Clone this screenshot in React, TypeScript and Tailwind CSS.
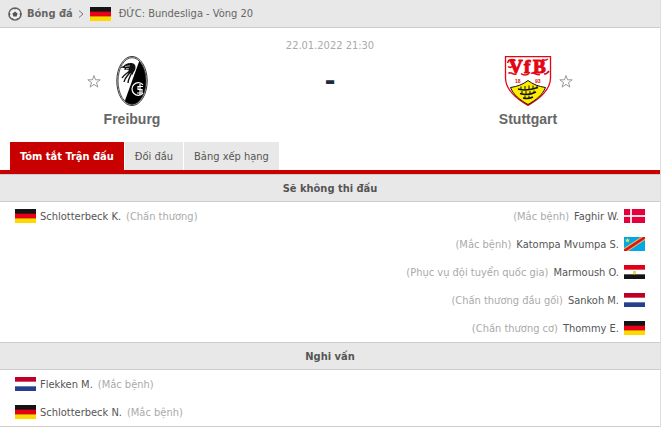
import clsx from "clsx";

type Country = "de" | "dk" | "cd" | "eg" | "nl";

type Player = {
  name: string;
  reason: string;
  country: Country;
};

const Flag = ({ country }: { country: Country }) => (
  <svg viewBox="0 0 21 14" className="h-[14px] w-[21px] shrink-0" role="img" aria-label={country}>
    {country === "de" && (
      <>
        <rect width="21" height="14" fill="#141414" />
        <rect y="4.67" width="21" height="4.67" fill="#ea0016" />
        <rect y="9.33" width="21" height="4.67" fill="#ffd800" />
      </>
    )}
    {country === "nl" && (
      <>
        <rect width="21" height="14" fill="#fff" />
        <rect width="21" height="4.67" fill="#be0027" />
        <rect y="9.33" width="21" height="4.67" fill="#24408e" />
      </>
    )}
    {country === "eg" && (
      <>
        <rect width="21" height="14" fill="#fff" />
        <rect width="21" height="4.67" fill="#e10019" />
        <rect y="9.33" width="21" height="4.67" fill="#141414" />
        <path d="M9 6h3v2.500l-1.500 1L9 8.500z" fill="#f5d23c" />
      </>
    )}
    {country === "dk" && (
      <>
        <rect width="21" height="14" fill="#e4003a" />
        <rect x="6" width="2" height="14" fill="#fff" opacity=".85" />
        <rect y="6" width="21" height="2" fill="#fff" opacity=".85" />
      </>
    )}
    {country === "cd" && (
      <>
        <rect width="21" height="14" fill="#00a9e6" />
        <path d="M0 14V11L17 0H21V3L4.500 14z" fill="#e8b84b" />
        <path d="M0 14V12.500L19 0H21V1.800L2.500 14z" fill="#dc1020" />
        <path d="M3.500 1l.7 1.600 1.800.1-1.400 1.100.5 1.700-1.600-1-1.600 1 .5-1.700L1 2.700l1.800-.1z" fill="#f5e13c" />
      </>
    )}
  </svg>
);

const BallIcon = () => (
  <svg viewBox="0 0 14 14" className="h-[14px] w-[14px]" aria-hidden="true">
    <circle cx="7" cy="7" r="6.100" fill="#f0f0f0" stroke="#666" strokeWidth="1.500" />
    <path d="M7 4.500l2.600 1.900-1 3H5.400l-1-3z" fill="#555" />
    <path d="M4.800 1.200L7 2.500l2.200-1.300zM.9 5.500l1.600 1.200L1.800 9 .9 8zM13.100 5.500l-1.600 1.200.7 2.300.9-1zM3 11.500l2.200-.2.500 1.900zM11 11.500l-2.200-.2-.5 1.900z" fill="#555" />
  </svg>
);

const FreiburgLogo = () => (
  <svg viewBox="0 0 50 50" className="h-[50px] w-[50px]" role="img" aria-label="Freiburg">
    <defs>
      <clipPath id="oval">
        <ellipse cx="25" cy="25" rx="14" ry="23.500" />
      </clipPath>
    </defs>
    <ellipse cx="25" cy="25" rx="15.200" ry="24.500" fill="#fff" stroke="#333" />
    <g clipPath="url(#oval)">
      <path d="M33 3L16 50H45V3z" fill="#000" />
    </g>
    <ellipse cx="25" cy="25" rx="14" ry="23.300" fill="none" stroke="#222" strokeWidth=".8" />
    {/* griffin head */}
    <path d="M13.500 12c1-1 2-1.500 3-2 1-2 5-3.500 8-3 3 .3 4 2 4 4.500 0 2-1 3.500-2 5l-1.500 3-1.500-4-3.500-2-3 .5 1-1.500-2-.8z" fill="#111" />
    <path d="M24 13c-2 4-7 5-9 9M24 14c-1 5-6 6-7 12M25 14c0 5-4 8-4 13" fill="none" stroke="#111" strokeWidth="1.400" />
    <path d="M18 10.500l5-.7M19 12.500l3 .3" stroke="#ddd" strokeWidth=".8" />
    {/* club monogram */}
    <path d="M36 28.800a6.300 6.300 0 1 0 0 8.400" fill="none" stroke="#fff" strokeWidth="1.200" />
    <path d="M36 30.500h-5v3h4v3.500h-5M33 28v11" fill="none" stroke="#fff" strokeWidth="1.200" />
  </svg>
);

const StuttgartLogo = () => (
  <svg viewBox="0 0 50 50" className="h-[50px] w-[50px]" role="img" aria-label="Stuttgart">
    <path d="M2.500.700H47.500V22C47.500 33 37 43 25 49.300 13 43 2.500 33 2.500 22z" fill="#fff" stroke="#e30613" strokeWidth="1.300" />
    <path d="M25 24.500C20 28.500 14 30.500 7.500 31.500 10.500 39 17 44 25 48.500 33 44 39.500 39 42.500 31.500 36 30.500 30 28.500 25 24.500z" fill="#ffed00" stroke="#111" />
    <path d="M15 33c6 1.500 13 1 20-1.500M17 37.500c5 1.500 11 1 16-1.500M20 42c4 1 7 .5 10-1" fill="none" stroke="#111" strokeWidth="1.500" />
    <path d="M18 30.500v3M22 30v4M26 29.500v4M30 29.500v3.500M34 29.500v2.500M19 35v3M23 35v3.500M27 35v3M31 34.500v2.500M22 39.500v3M26 39.500v3" stroke="#111" />
    <g fontFamily="Liberation Serif, serif" fontWeight="700" fontSize="19" fill="#e30613" stroke="#e30613" strokeWidth="1.100">
      <text x="6" y="17">V</text>
      <text x="21" y="17">f</text>
      <text x="30" y="17">B</text>
    </g>
    <path d="M4.500 7c1-4 5-4 8-2.500M5 10.500c2 1.500 4 1 5-1M5.500 17.500c2-3 4 2 8 .5M18 17.500c2 2 6 2 8 0M28 17.500c3-2 5 2 9 1M41 18c2 0 4-1.500 5-3M39 3.500c2 1 4 1 6-.5" fill="none" stroke="#e30613" strokeWidth="1.500" />
    <g fontFamily="Liberation Sans, sans-serif" fontSize="5" fontWeight="700" fill="#e30613">
      <text x="12" y="27">18</text>
      <text x="32" y="27">93</text>
    </g>
  </svg>
);

const StarButton = ({ label }: { label: string }) => (
  <button type="button" aria-label={label} className="h-[14px] w-[14px] cursor-pointer">
    <svg viewBox="0 0 14 14" fill="none" stroke="#999" className="h-[14px] w-[14px]">
      <path d="M7 1.500l1.500 4.300h4.700L9.500 8.600l1.400 4.500L7 10.400l-3.900 2.700 1.400-4.500L.8 5.800h4.700z" />
    </svg>
  </button>
);

const Section = ({ title, home, away }: { title: string; home: Player[]; away: Player[] }) => (
  <section>
    <h2 className="h-7 border-y border-[#ccc] bg-[#e8e8e8] text-center font-bold leading-7">{title}</h2>
    <div className="flex justify-between px-[15px]">
      <ul>
        {home.map((player) => (
          <li key={player.name} className="flex h-7 items-center">
            <Flag country={player.country} />
            <span className="ml-1 pt-[2px]">{player.name}</span>
            <span className="ml-[5px] pt-[2px] text-[#aaa]">({player.reason})</span>
          </li>
        ))}
      </ul>
      <ul>
        {away.map((player) => (
          <li key={player.name} className="flex h-7 items-center justify-end">
            <span className="mr-[5px] pt-[2px] text-[#aaa]">({player.reason})</span>
            <span className="mr-[5px] pt-[2px]">{player.name}</span>
            <Flag country={player.country} />
          </li>
        ))}
      </ul>
    </div>
  </section>
);

const missing: { home: Player[]; away: Player[] } = {
  home: [{ name: "Schlotterbeck K.", reason: "Chấn thương", country: "de" }],
  away: [
    { name: "Faghir W.", reason: "Mắc bệnh", country: "dk" },
    { name: "Katompa Mvumpa S.", reason: "Mắc bệnh", country: "cd" },
    { name: "Marmoush O.", reason: "Phục vụ đội tuyển quốc gia", country: "eg" },
    { name: "Sankoh M.", reason: "Chấn thương đầu gối", country: "nl" },
    { name: "Thommy E.", reason: "Chấn thương cơ", country: "de" },
  ],
};

const doubtful: Player[] = [
  { name: "Flekken M.", reason: "Mắc bệnh", country: "nl" },
  { name: "Schlotterbeck N.", reason: "Mắc bệnh", country: "de" },
];

const tabs = ["Tóm tắt Trận đấu", "Đối đầu", "Bảng xếp hạng"];

const App = () => {
  return (
    <main className="border-r border-[#ddd] bg-white font-['DejaVu_Sans_Condensed','DejaVu_Sans',sans-serif] text-[11px] leading-4 text-[#555]">
      <nav className="flex h-7 items-center border-b border-[#ccc] bg-[#e8e8e8] pl-2">
        <BallIcon />
        <a href="#" className="ml-[5px] pt-px font-bold text-[#666]">Bóng đá</a>
        <svg viewBox="0 0 6 8" className="ml-[5px] mr-[6px] h-2 w-[6px]" fill="none" stroke="#777" aria-hidden="true">
          <path d="M1 .5L5 4 1 7.500" />
        </svg>
        <Flag country="de" />
        <a href="#" className="ml-2 pt-px text-[#666]">ĐỨC: Bundesliga - Vòng 20</a>
      </nav>

      {/* Scoreboard */}
      <header className="pt-[10px]">
        <p className="text-center text-[#aaa]">22.01.2022 21:30</p>
        <div className="mt-[2px] grid grid-cols-[2fr_1fr_2fr] font-['Liberation_Sans',sans-serif]">
          <div>
            <div className="grid grid-cols-[1fr_auto_1fr] items-center gap-[6px]">
              <span className="flex justify-end"><StarButton label="Freiburg" /></span>
              <FreiburgLogo />
            </div>
            <h1 className="mt-1 text-center text-[14px] font-bold leading-[18px] text-[#666]">Freiburg</h1>
          </div>
          <div className="flex h-[50px] items-center justify-center pb-1 text-[32px] font-bold text-[#1e2b3a]">-</div>
          <div>
            <div className="grid grid-cols-[1fr_auto_1fr] items-center gap-[6px]">
              <span />
              <StuttgartLogo />
              <StarButton label="Stuttgart" />
            </div>
            <h1 className="mt-1 text-center text-[14px] font-bold leading-[18px] text-[#666]">Stuttgart</h1>
          </div>
        </div>
      </header>

      {/* Tabs */}
      <div role="tablist" className="mt-[14px] flex gap-px border-b-4 border-[#c80000] pl-[10px]">
        {tabs.map((tab, i) => (
          <button
            key={tab}
            type="button"
            role="tab"
            aria-selected={i === 0}
            className={clsx(
              "h-7 cursor-pointer px-[10px] pt-[2px]",
              i === 0 ? "bg-[#c80000] font-bold text-white" : "bg-[#e8e8e8]"
            )}
          >
            {tab}
          </button>
        ))}
      </div>

      <Section title="Sẽ không thi đấu" home={missing.home} away={missing.away} />
      <Section title="Nghi vấn" home={doubtful} away={[]} />
      <div className="border-b border-[#ccc]" />
    </main>
  );
};

export default App;
